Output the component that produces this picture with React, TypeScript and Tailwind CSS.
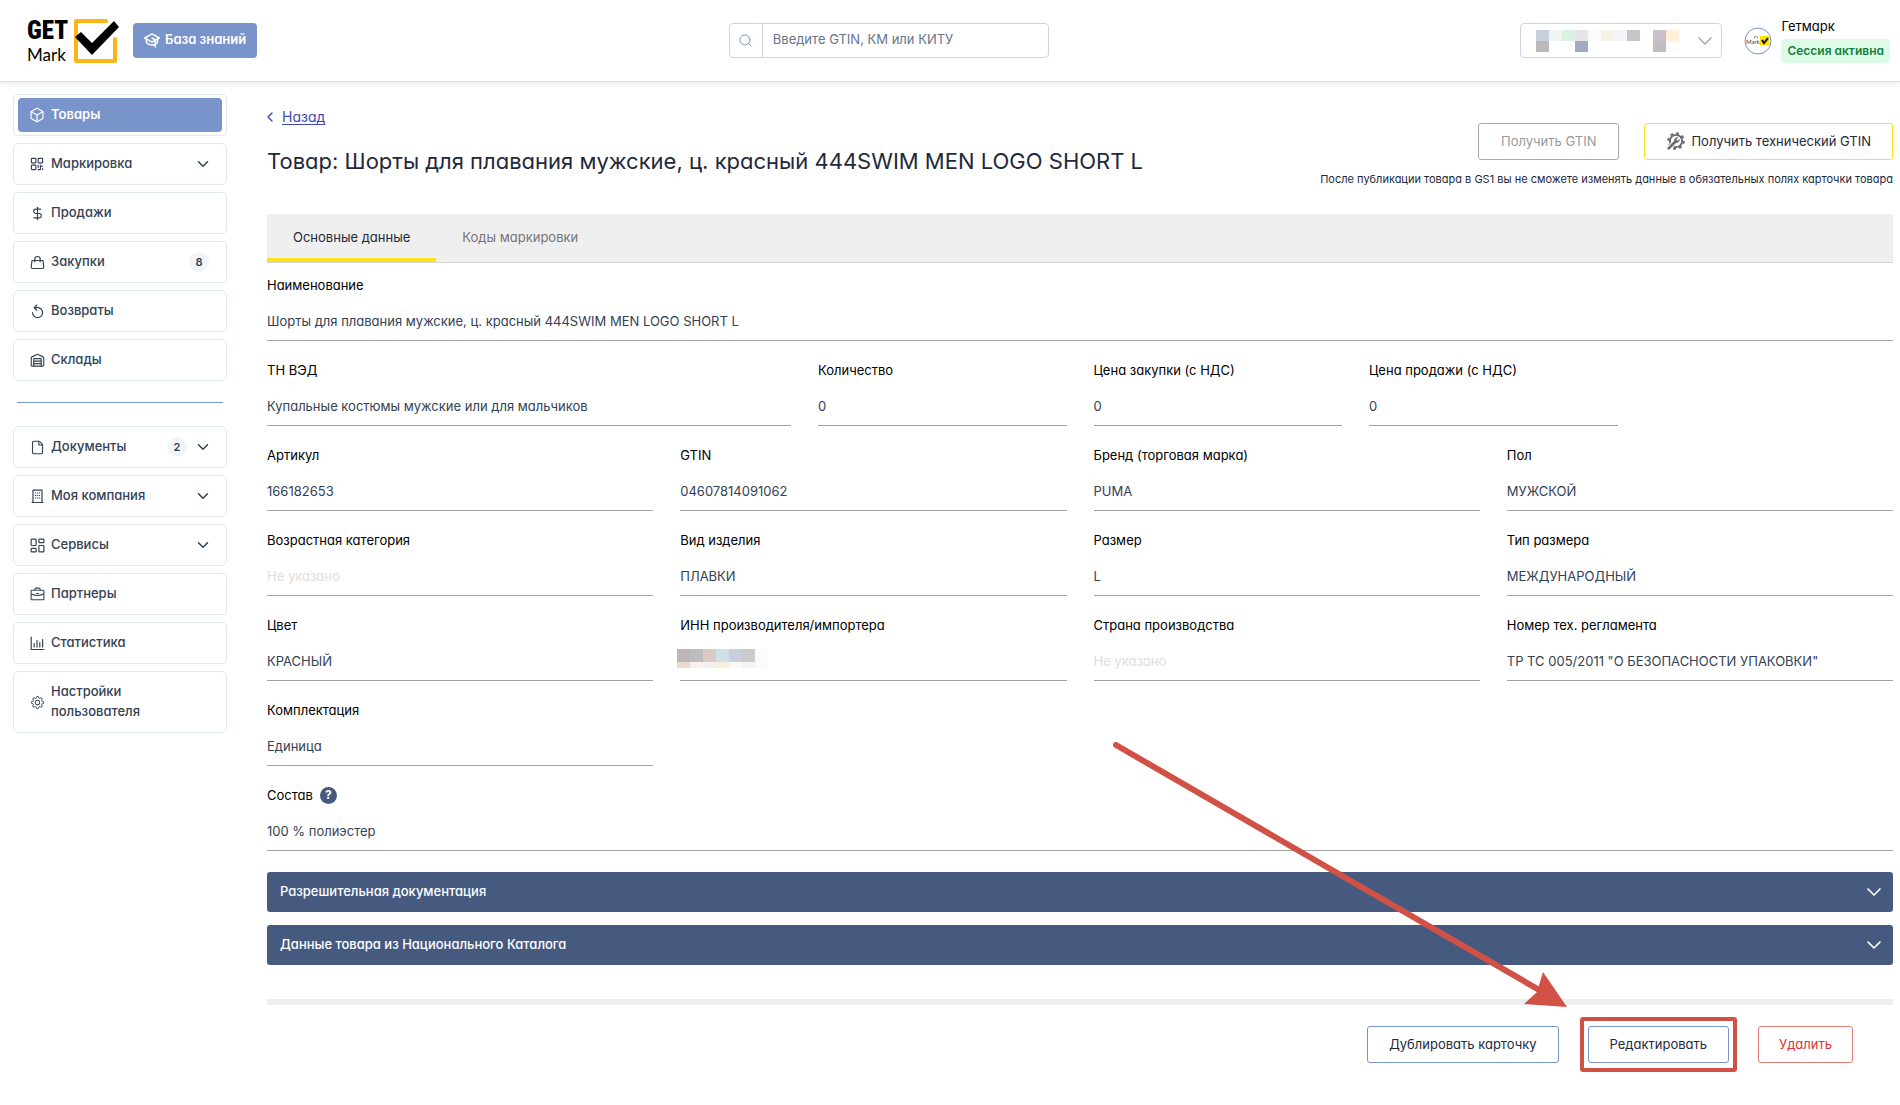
import { useId, useState } from "react";
import type { ReactNode } from "react";
import { ChevronDown, ChevronLeft, Search, Warehouse, LayoutDashboard, Box, File, DollarSign } from "lucide-react";
import { BsGear } from "react-icons/bs";
import { PiGraduationCapBold, PiBriefcase, PiQrCode } from "react-icons/pi";

function Logo() {
  return (
    <a href="#" aria-label="GET Mark" className="flex items-center">
      <span className="flex w-[46px] flex-col text-black">
        <span className="font-['Roboto_Condensed','Liberation_Sans_Narrow','Roboto',sans-serif] text-[25px] leading-[29px] font-black">GET</span>
        <span className="font-['Lato',sans-serif] text-[17px] leading-[20px]">Mark</span>
      </span>
      <svg width="47" height="46" viewBox="0 0 47 46" fill="none" aria-hidden="true">
        <path d="M33 3H3V43H42V21" stroke="#fdb515" strokeWidth="4" strokeLinecap="round" strokeLinejoin="round" />
        <path d="M2 19L8 14L19 25L41 3L46 9L19 37Z" fill="#000" />
      </svg>
    </a>
  );
}

function Mosaic({ rows, cells, label }: { rows: string[][]; cells: string[]; label: string }) {
  return (
    <span role="img" aria-label={label} className="pointer-events-none flex flex-col">
      {rows.map((row, i) => (
        <span key={i} className="flex">
          {row.map((c, j) => (
            <span key={j} className={cells[i]} style={{ backgroundColor: c }} />
          ))}
        </span>
      ))}
    </span>
  );
}

const accountPixels = [
  ["#c6d1df", "#f2f4f4", "#d9f0e3", "#e5e6e6", "#fbfbfb", "#f6f3e6", "#f3f5f7", "#c8c3c7", "#ffffff", "#cabfcb", "#ffefd6"],
  ["#bdb8be", "#ffffff", "#ffffff", "#a2abbd", "#ffffff", "#ffffff", "#ffffff", "#ffffff", "#fefefa", "#c0bec0", "#fdfdfd"],
];
const innPixels = [
  ["#bcb6b8", "#bdbdbf", "#d9cac7", "#cfdfe6", "#c9cfdd", "#cbcacd", "#fcfbfa"],
  ["#edd9d0", "#f6f1ee", "#f4f0ee", "#f6eddc", "#fdf8f3", "#f4f4f4", "#fafafa"],
];

function Header() {
  return (
    <header className="flex h-[82px] items-center justify-between border-b border-[#dcdcdc] pr-[10px] pl-[27px] shadow-[0_2px_5px_rgba(0,0,0,0.08)]">
      <div className="flex items-center gap-[13px]">
        <Logo />
        <button className="flex h-[35px] items-center gap-[5px] rounded-[4px] bg-[#7993cb] px-[11px] pb-[2px] text-[13px] font-semibold text-white">
          <PiGraduationCapBold size={16} />
          База знаний
        </button>
      </div>
      <form className="flex h-[35px] w-[320px] rounded-[4px] border border-[#cbd5e1]">
        <button type="button" aria-label="Найти" className="flex w-[33px] items-center justify-center border-r border-[#cbd5e1] text-[#7993cb]">
          <Search size={15} strokeWidth={1.6} />
        </button>
        <input aria-label="Поиск" placeholder="Введите GTIN, КМ или КИТУ" className="min-w-0 flex-1 px-[10px] pb-[2px] text-[13px] outline-none [font-feature-settings:normal] placeholder:text-[#64748b]" />
      </form>
      <div className="flex items-center justify-end">
        <div className="relative h-[35px] w-[202px]">
          <select aria-label="Организация" className="h-full w-full appearance-none rounded-[4px] border border-[#cbd5e1] bg-white" />
          <div className="pointer-events-none absolute inset-0 flex items-center justify-between pr-[5px] pl-4">
            <Mosaic rows={accountPixels} cells={["h-[11px] w-[13px]", "h-[11px] w-[13px]"]} label="Скрытое название организации" />
            <ChevronDown size={24} strokeWidth={1.4} className="text-[#94a3b8]" />
          </div>
        </div>
        <svg width="28" height="28" viewBox="0 0 28 28" className="mr-[9px] ml-[22px]" aria-hidden="true">
          <circle cx="14" cy="14" r="13" fill="#fff" stroke="#7993cb" />
          <text x="2" y="17" fontSize="6" fontFamily="Lato, sans-serif" fill="#333">Mark</text>
          <path d="M10.500 11.500V9.500H12.500M13.500 9.500V11.500" fill="none" stroke="#999" />
          <path d="M16 9H25V18H16Z" fill="#fde100" />
          <path d="M18 13L20 16L24 11" fill="none" stroke="#111" strokeWidth="2" />
        </svg>
        <div className="flex flex-col gap-[3px] pb-[2px]">
          <span className="text-[13px] leading-[20px] text-black">Гетмарк</span>
          <span className="rounded-[4px] bg-[#dcfce7] px-[6px] text-[12px] leading-[24px] font-semibold text-[#15803d]">Сессия активна</span>
        </div>
      </div>
    </header>
  );
}

function LineIcon({ children }: { children: ReactNode }) {
  return (
    <svg width="15" height="15" viewBox="0 0 15 15" fill="none" stroke="currentColor" strokeWidth="1.2" strokeLinecap="round" strokeLinejoin="round" className="shrink-0" aria-hidden="true">
      {children}
    </svg>
  );
}

const bagIcon = <LineIcon><path d="M2 5.500H13L13.800 12.300Q13.800 13.500 12.600 13.500H2.400Q1.200 13.500 1.200 12.300Z" /><path d="M4.800 7V4.200Q4.800 1.500 7.500 1.500Q10.200 1.500 10.200 4.200V7" /></LineIcon>;
const returnIcon = <LineIcon><path d="M6.800 1.200L4.200 3.700L6.800 6.200" /><path d="M4.400 3.700H8A5 5 0 1 1 2.600 8.600" /></LineIcon>;
const chartIcon = <LineIcon><path d="M1.200 1V13.500H14" /><path d="M4.200 11V7.500M7 11V4.500M9.800 11V6.500M12.600 11V3.500" /></LineIcon>;
const buildingIcon = <LineIcon><path d="M3 13.500V1.200H12V13.500M2 13.500H13" /><path d="M5.500 3.500V11M7.500 3.500V11M9.500 3.500V11" strokeDasharray="1 1.500" strokeLinecap="butt" /></LineIcon>;

type Item = { icon: ReactNode; text: string; active?: boolean; badge?: string; menu?: boolean };

const topItems: Item[] = [
  { icon: <Box size={16} strokeWidth={1.8} className="shrink-0" />, text: "Товары", active: true },
  { icon: <PiQrCode size={18} className="shrink-0" />, text: "Маркировка", menu: true },
  { icon: <DollarSign size={15} strokeWidth={1.8} className="shrink-0" />, text: "Продажи" },
  { icon: bagIcon, text: "Закупки", badge: "8" },
  { icon: returnIcon, text: "Возвраты" },
  { icon: <Warehouse size={15} strokeWidth={1.8} className="shrink-0" />, text: "Склады" },
];
const bottomItems: Item[] = [
  { icon: <File size={15} strokeWidth={1.8} className="shrink-0" />, text: "Документы", badge: "2", menu: true },
  { icon: buildingIcon, text: "Моя компания", menu: true },
  { icon: <LayoutDashboard size={17} strokeWidth={1.7} className="shrink-0" />, text: "Сервисы", menu: true },
  { icon: <PiBriefcase size={17} className="shrink-0" />, text: "Партнеры" },
  { icon: chartIcon, text: "Статистика" },
  { icon: <BsGear size={13} className="shrink-0" />, text: "Настройки пользователя" },
];

function NavItem({ icon, text, active, badge, menu }: Item) {
  return (
    <li className="rounded-[5px] border border-[#e2e8f0] px-1 py-[3px]">
      <a
        href="#"
        className={
          active
            ? "flex min-h-[34px] items-center gap-[7px] rounded-[4px] bg-[#7993cb] pr-[10px] pl-[12px] text-[13px] leading-5 font-semibold text-white"
            : "flex min-h-[34px] items-center gap-[7px] rounded-[4px] py-[6px] pr-[10px] pl-[12px] text-[13px] leading-5 font-medium text-[#334155]"
        }
      >
        <span className="flex w-[14px] shrink-0 justify-center">{icon}</span>
        <span className="flex-1 pb-[2px]">{text}</span>
        {badge && <span className="flex size-5 items-center justify-center rounded-full bg-[#f1f5f9] text-[11px] font-semibold">{badge}</span>}
        {menu && <ChevronDown size={18} strokeWidth={2} />}
        {badge && !menu && <span className="-ml-1" />}
      </a>
    </li>
  );
}

function Sidebar() {
  return (
    <nav className="w-[214px] shrink-0 pt-3">
      <ul className="flex flex-col gap-[7px]">
        {topItems.map((i) => <NavItem key={i.text} {...i} />)}
      </ul>
      <hr className="mx-1 mt-[21px] mb-[23px] border-[#7993cb]" />
      <ul className="flex flex-col gap-[7px]">
        {bottomItems.map((i) => <NavItem key={i.text} {...i} />)}
      </ul>
    </nav>
  );
}

function Field({ label, value, span, help, masked }: { label: string; value?: string; span: string; help?: boolean; masked?: boolean }) {
  const id = useId();
  return (
    <div className={span}>
      <div className="flex h-5 items-center gap-[7px]">
        <label htmlFor={id} className="text-[13px] leading-5 text-black">{label}</label>
        {help && (
          <button type="button" aria-label="Справка" className="flex size-[17px] items-center justify-center rounded-full bg-[#465a80] text-[12px] font-bold text-white">?</button>
        )}
      </div>
      <div className="relative mt-[6px]">
        <input id={id} readOnly defaultValue={value} placeholder={masked ? "" : "Не указано"} className="h-10 w-full border-b border-[#a3a3a3] text-[13px] text-[#334155] outline-none placeholder:text-[#dedede]" />
        {masked && (
          <div className="pointer-events-none absolute top-2 left-[-3px]">
            <Mosaic rows={innPixels} cells={["h-[13px] w-[13px]", "h-[6px] w-[13px]"]} label="Скрытый ИНН" />
          </div>
        )}
      </div>
    </div>
  );
}

const fields = [
  { label: "Наименование", value: "Шорты для плавания мужские, ц. красный 444SWIM MEN LOGO SHORT L", span: "col-span-12" },
  { label: "ТН ВЭД", value: "Купальные костюмы мужские или для мальчиков", span: "col-span-4" },
  { label: "Количество", value: "0", span: "col-span-2" },
  { label: "Цена закупки (с НДС)", value: "0", span: "col-span-2" },
  { label: "Цена продажи (с НДС)", value: "0", span: "col-span-2" },
  { label: "Артикул", value: "166182653", span: "col-span-3 col-start-1" },
  { label: "GTIN", value: "04607814091062", span: "col-span-3" },
  { label: "Бренд (торговая марка)", value: "PUMA", span: "col-span-3" },
  { label: "Пол", value: "МУЖСКОЙ", span: "col-span-3" },
  { label: "Возрастная категория", span: "col-span-3" },
  { label: "Вид изделия", value: "ПЛАВКИ", span: "col-span-3" },
  { label: "Размер", value: "L", span: "col-span-3" },
  { label: "Тип размера", value: "МЕЖДУНАРОДНЫЙ", span: "col-span-3" },
  { label: "Цвет", value: "КРАСНЫЙ", span: "col-span-3" },
  { label: "ИНН производителя/импортера", span: "col-span-3", masked: true },
  { label: "Страна производства", span: "col-span-3" },
  { label: "Номер тех. регламента", value: "ТР ТС 005/2011 \"О БЕЗОПАСНОСТИ УПАКОВКИ\"", span: "col-span-3" },
  { label: "Комплектация", value: "Единица", span: "col-span-3" },
  { label: "Состав", value: "100 % полиэстер", span: "col-span-12", help: true },
];

function ToolGear() {
  return (
    <svg width="19" height="19" viewBox="0 0 18 18" aria-hidden="true">
      <circle cx="9.5" cy="8.5" r="5.8" fill="none" stroke="#6b6b6b" strokeWidth="1.8" />
      <circle cx="9.5" cy="8.5" r="7.2" fill="none" stroke="#6b6b6b" strokeWidth="2.2" strokeDasharray="2.6 3.05" />
      <path d="M1 17L7 11" stroke="#fff" strokeWidth="4.6" />
      <path d="M2.500 15.500L9 9" stroke="#6b6b6b" strokeWidth="2.6" strokeLinecap="round" />
      <path d="M11.600 5.200L9.800 7L11 8.200L12.800 6.400C13.400 8.400 12 10.200 9.800 10.200L7.800 8.200C7.800 6 9.600 4.600 11.600 5.200Z" fill="#6b6b6b" />
    </svg>
  );
}

function Accordion({ title }: { title: string }) {
  const [open, setOpen] = useState(false);
  return (
    <button aria-expanded={open} onClick={() => setOpen(!open)} className="flex h-10 w-full items-center justify-between rounded-[3px] bg-[#465a80] pr-[7px] pl-[13px] text-[13px] font-medium text-white">
      <span>{title}</span>
      <ChevronDown size={24} strokeWidth={1.7} />
    </button>
  );
}

function Pointer() {
  return (
    <div className="pointer-events-none absolute -inset-x-2 -inset-y-[9px] rounded-[3px] border-4 border-[#d25146]">
      <svg width="454" height="266" viewBox="0 0 454 266" className="absolute right-[166px] bottom-[60px] max-w-none" aria-hidden="true">
        <path d="M3 3L428 249" stroke="#d25146" strokeWidth="6" strokeLinecap="round" />
        <path d="M454 265L430 230L424 250L411 262Z" fill="#d25146" />
      </svg>
    </div>
  );
}

export default function App() {
  return (
    <div className="min-h-screen bg-white font-['Inter',sans-serif] text-[#1e293b] [font-feature-settings:'cv11']">
      <Header />
      <div className="flex gap-10 pr-[7px] pl-[13px]">
        <Sidebar />
        <main className="min-w-0 flex-1">
          <div className="flex h-[132px] items-start justify-between">
            <div className="pt-[25px]">
              <a href="#" className="flex items-center text-[14px] leading-5 text-[#3f48b5]">
                <ChevronLeft size={16} className="mr-[4px] -ml-[5px]" />
                <span className="underline underline-offset-2">Назад</span>
              </a>
              <h1 className="mt-[18px] text-[22px] leading-8">Товар: Шорты для плавания мужские, ц. красный 444SWIM MEN LOGO SHORT L</h1>
            </div>
            <div className="flex flex-col items-end pt-[41px]">
              <div className="flex gap-[25px]">
                <button disabled className="h-[37px] rounded-[3px] border border-[#a8a8a8] px-[22px] text-[13px] text-[#9a9a9a]">Получить GTIN</button>
                <button className="flex h-[37px] items-center gap-[6px] rounded-[3px] border border-[#fbe31c] px-[21px] text-[13px]">
                  <ToolGear />
                  Получить технический GTIN
                </button>
              </div>
              <p className="mt-[11px] text-[11px] leading-4">После публикации товара в GS1 вы не сможете изменять данные в обязательных полях карточки товара</p>
            </div>
          </div>
          <div role="tablist" className="flex h-[49px] border-b border-[#d6d6d6] bg-[#efefef]">
            <button role="tab" aria-selected="true" className="border-b-4 border-[#fbe31c] px-[26px] pt-[3px] text-[13px]">Основные данные</button>
            <button role="tab" aria-selected="false" className="border-b-4 border-transparent px-[26px] pt-[3px] text-[13px] text-[#757575]">Коды маркировки</button>
          </div>
          <div className="grid grid-cols-12 gap-x-[27px] gap-y-[19px] pt-3">
            {fields.map((f) => <Field key={f.label} {...f} />)}
          </div>
          <div className="mt-[21px] flex flex-col gap-[13px]">
            <Accordion title="Разрешительная документация" />
            <Accordion title="Данные товара из Национального Каталога" />
          </div>
          <div className="mt-[34px] flex justify-end gap-[29px] border-t-[6px] border-[#eeeeee] pt-[21px] pr-10">
            <button className="h-[37px] rounded-[3px] border border-[#7993cb] px-[21px] text-[13px]">Дублировать карточку</button>
            <div className="relative">
              <button className="h-[37px] rounded-[3px] border border-[#7993cb] px-[21px] text-[13px]">Редактировать</button>
              <Pointer />
            </div>
            <button className="h-[37px] rounded-[3px] border border-[#e08078] px-5 text-[13px] text-[#e03131]">Удалить</button>
          </div>
        </main>
      </div>
    </div>
  );
}
